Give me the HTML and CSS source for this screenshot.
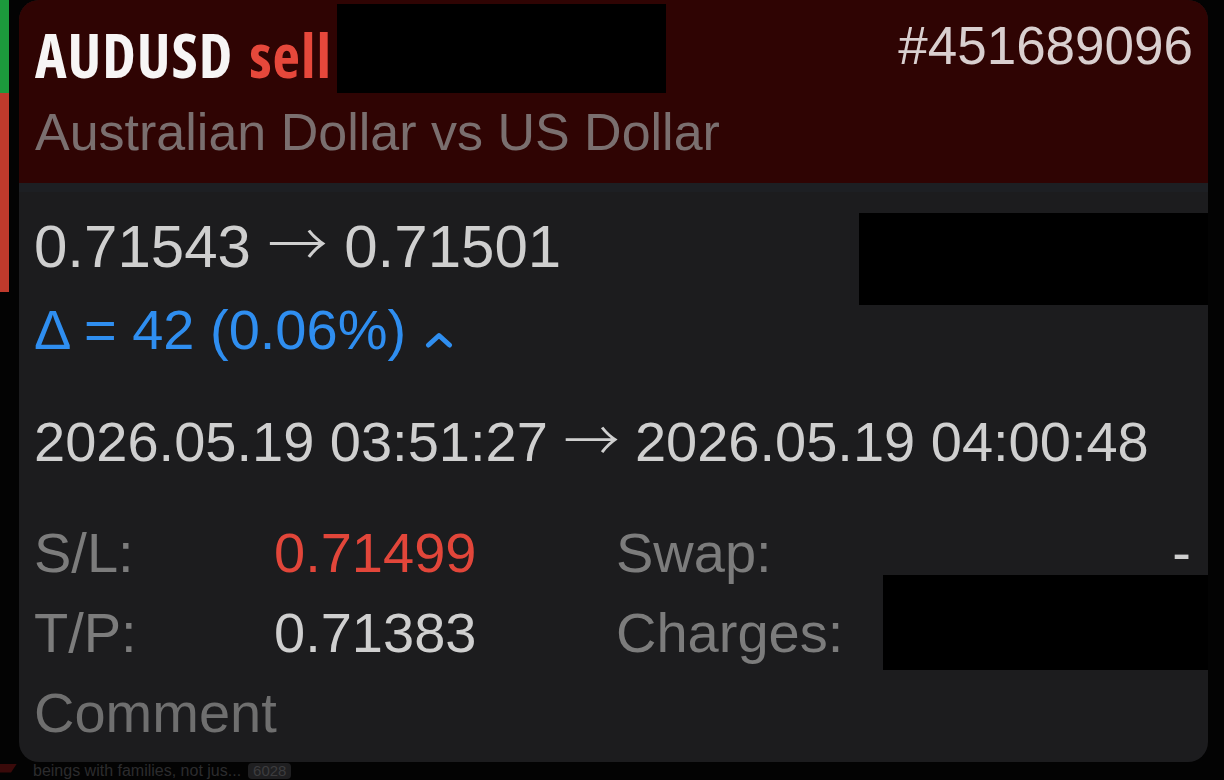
FILE: index.html
```html
<!DOCTYPE html>
<html lang="en">
<head>
    <meta charset="UTF-8">
    <meta name="viewport" content="width=device-width, initial-scale=1.0">
    <title>Deal AUDUSD</title>
    <link rel="stylesheet" href="styles.css">
</head>
<body>
    <div class="screen">
        <!-- полоска слева от карточки -->
        <div class="side-strip">
            <div class="strip-up"></div>
            <div class="strip-down"></div>
        </div>
        <section class="deal-card">
            <header class="deal-head">
                <div class="head-row">
                    <h1 class="symbol">AUDUSD <span class="side-sell">sell</span></h1>
                    <span class="ticket">#451689096</span>
                </div>
                <p class="symbol-desc">Australian Dollar vs US Dollar</p>
            </header>
            <div class="deal-body">
                <div class="prices">0.71543 <span class="arrow">→</span> 0.71501</div>
                <div class="delta">Δ = 42 (0.06%)<svg class="delta-arrow" width="28" height="16" viewBox="0 0 28 16"><polyline points="3.5,13 14,3.5 24.5,13" fill="none" stroke="#2f8ef0" stroke-width="5" stroke-linecap="round" stroke-linejoin="round"/></svg></div>
                <div class="times">2026.05.19 03:51:27 <span class="arrow">→</span> 2026.05.19 04:00:48</div>
                <div class="params">
                    <span class="param-label">S/L:</span>
                    <span class="param-value loss">0.71499</span>
                    <span class="param-label">Swap:</span>
                    <span class="param-value right">-</span>
                    <span class="param-label">T/P:</span>
                    <span class="param-value">0.71383</span>
                    <span class="param-label">Charges:</span>
                    <span class="param-value right"></span>
                </div>
                <div class="comment">Comment</div>
            </div>
            <!-- закрашенные места -->
            <div class="redact redact-name"></div>
            <div class="redact redact-profit"></div>
            <div class="redact redact-charges"></div>
        </section>
    </div>
    <div class="tail">
        <div class="tail-mark"></div>
        <span class="tail-text">beings with families, not jus...</span>
        <span class="tail-badge">6028</span>
    </div>
</body>
</html>
```

FILE: styles.css
```css
body {
    margin: 0;
    background-color: #030303;
    font-family: "Liberation Sans", Arial, sans-serif;
    overflow: hidden;
}

.screen {
    display: flex;
    align-items: flex-start;
    gap: 10px;
}

.side-strip {
    width: 9px;
}
.strip-up {
    height: 93px;
    background-color: #1c9a3c;
}
.strip-down {
    height: 199px;
    background-color: #bf3a2c;
}

.deal-card {
    position: relative;
    width: 1189px;
    background-color: #1c1c1e;
    border-radius: 20px;
    overflow: hidden;
}

/* шапка */
.deal-head {
    background-color: #2f0403;
    padding: 0 15px 14px 16px;
}
.head-row {
    display: flex;
    justify-content: space-between;
    align-items: flex-start;
}
.symbol {
    margin: 15px 0 0;
    font-family: "Open Sans", sans-serif;
    font-stretch: 75%;
    font-weight: bold;
    font-size: 60px;
    line-height: 80px;
    letter-spacing: 1px;
    word-spacing: 4px;
    color: #f7f5f5;
}
.side-sell {
    color: #e6483b;
}
.ticket {
    margin-top: 15px;
    font-size: 53px;
    line-height: 61px;
    color: #d9cfcf;
}
.symbol-desc {
    margin: 0;
    font-size: 52px;
    line-height: 74px;
    color: #7a6f6f;
}

/* тело */
.deal-body {
    border-top: 9px solid #1d1f23;
    padding: 15px 0 9px 15px;
    color: #cfcfcf;
    font-size: 56px;
    line-height: 80px;
}
.arrow {
    font-family: "Noto Sans CJK SC", sans-serif;
    font-weight: 300;
    line-height: 0;
}
.prices {
    font-size: 60px;
}
.delta {
    margin-top: 3px;
    color: #2f8ef0;
}
.delta-arrow {
    margin-left: 19px;
    margin-bottom: 1px;
}
.times {
    margin-top: 32px;
}
.params {
    margin-top: 31px;
    display: grid;
    grid-template-columns: 240px 342px 267px 1fr;
    grid-auto-rows: 80px;
}
.param-label {
    color: #7c7c7c;
}
.param-value.loss {
    color: #e2463a;
}
.param-value.right {
    text-align: right;
    padding-right: 17px;
}
.comment {
    color: #6f6f6f;
}

.redact {
    position: absolute;
    background-color: #000;
}
.redact-name {
    left: 318px;
    top: 4px;
    width: 329px;
    height: 89px;
}
.redact-profit {
    left: 840px;
    top: 213px;
    width: 349px;
    height: 92px;
}
.redact-charges {
    left: 864px;
    top: 575px;
    width: 325px;
    height: 95px;
}

/* то что видно под карточкой */
.tail {
    display: flex;
    align-items: center;
    height: 18px;
    font-size: 16px;
}
.tail-mark {
    width: 17px;
    height: 9px;
    margin-top: -6px;
    background-color: #3a0a0a;
    clip-path: polygon(0 0, 100% 0, 65% 100%, 0 100%);
}
.tail-text {
    margin-left: 16px;
    color: #2c2c2e;
}
.tail-badge {
    margin-left: 7px;
    padding: 0 5px;
    border-radius: 4px;
    background-color: #1f1f21;
    color: #3c3c3e;
    font-size: 15px;
    line-height: 16px;
}
```
